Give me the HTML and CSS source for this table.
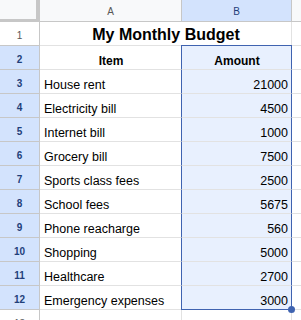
FILE: index.html
```html
<!DOCTYPE html>
<html>
<head>
<meta charset="utf-8">
<link rel="stylesheet" href="styles.css">
</head>
<body>
<div class="sheet">
  <div class="corner"></div>
  <div class="colhead">A</div>
  <div class="colhead sel">B</div>
  <div class="colhead rest"></div>

  <div class="rowhead">1</div>
  <div class="cell title">My Monthly Budget</div>
  <div class="cell rest"></div>

  <div class="rowhead sel">2</div>
  <div class="cell head">Item</div>
  <div class="cell head amt">Amount</div>
  <div class="cell rest"></div>

  <div class="rowhead sel">3</div><div class="cell">House rent</div><div class="cell num">21000</div><div class="cell rest"></div>
  <div class="rowhead sel">4</div><div class="cell">Electricity bill</div><div class="cell num">4500</div><div class="cell rest"></div>
  <div class="rowhead sel">5</div><div class="cell">Internet bill</div><div class="cell num">1000</div><div class="cell rest"></div>
  <div class="rowhead sel">6</div><div class="cell">Grocery bill</div><div class="cell num">7500</div><div class="cell rest"></div>
  <div class="rowhead sel">7</div><div class="cell">Sports class fees</div><div class="cell num">2500</div><div class="cell rest"></div>
  <div class="rowhead sel">8</div><div class="cell">School fees</div><div class="cell num">5675</div><div class="cell rest"></div>
  <div class="rowhead sel">9</div><div class="cell">Phone reacharge</div><div class="cell num">560</div><div class="cell rest"></div>
  <div class="rowhead sel">10</div><div class="cell">Shopping</div><div class="cell num">5000</div><div class="cell rest"></div>
  <div class="rowhead sel">11</div><div class="cell">Healthcare</div><div class="cell num">2700</div><div class="cell rest"></div>
  <div class="rowhead sel">12</div><div class="cell">Emergency expenses</div><div class="cell num last">3000<span class="handle"></span></div><div class="cell rest"></div>
  <div class="rowhead">13</div><div class="cell"></div><div class="cell"></div><div class="cell rest"></div>
</div>
</body>
</html>
```
FILE: styles.css
```css
html, body {
  margin: 0;
  padding: 0;
  background: #ffffff;
  overflow: hidden;
}
.sheet {
  display: grid;
  grid-template-columns: 40px 142px 110px 1fr;
  grid-template-rows: 22px repeat(13, 24px);
  width: 301px;
  height: 320px;
  overflow: hidden;
  font-family: "Liberation Sans", Arial, sans-serif;
  font-size: 12.5px;
  line-height: 15px;
  color: #000;
}
.corner {
  background: #f8f9fa;
  border-right: 4px solid #c7c7c7;
  border-bottom: 3px solid #c7c7c7;
}
.colhead {
  background: #f8f9fa;
  border-right: 1px solid #c7c7c7;
  border-bottom: 1px solid #c7c7c7;
  display: flex;
  align-items: center;
  justify-content: center;
  font-size: 10px;
  color: #575757;
  padding-top: 2px;
}
.colhead.sel {
  background: #d3e3fd;
  color: #1f3f7a;
}
.colhead.rest { border-right: none; }
.rowhead {
  background: #ffffff;
  border-right: 1px solid #c7c7c7;
  border-bottom: 1px solid #c7c7c7;
  display: flex;
  align-items: center;
  justify-content: center;
  font-size: 10px;
  color: #575757;
  padding-top: 3px;
}
.rowhead.sel {
  background: #d3e3fd;
  color: #1f3f7a;
  font-weight: bold;
}
.cell {
  border-right: 1px solid #e2e2e2;
  border-bottom: 1px solid #e2e2e2;
  display: flex;
  align-items: flex-end;
  padding: 0 3px 0 4px;
  white-space: nowrap;
  overflow: hidden;
  min-width: 0;
}
.cell.rest { border-right: none; padding: 0; }
.cell.title {
  grid-column: 2 / 4;
  justify-content: center;
  font-weight: bold;
  font-size: 16px;
  line-height: 18px;
  padding-bottom: 1px;
}
.cell.head { justify-content: center; font-weight: bold; font-size: 12px; }
.cell.amt, .cell.num {
  background: #e8f0fe;
  border-left: 1px solid #3f63b0;
  border-right: 1px solid #3f63b0;
  margin-left: -1px;
}
.cell.amt {
  border-top: 1px solid #3f63b0;
  margin-top: -1px;
}
.cell.num { justify-content: flex-end; }
.cell.last {
  border-bottom: 1px solid #3f63b0;
  overflow: visible;
  position: relative;
  z-index: 2;
}
.handle {
  position: absolute;
  right: -4px;
  bottom: -4px;
  width: 7px;
  height: 7px;
  border-radius: 50%;
  background: #3f63b0;
}
```
